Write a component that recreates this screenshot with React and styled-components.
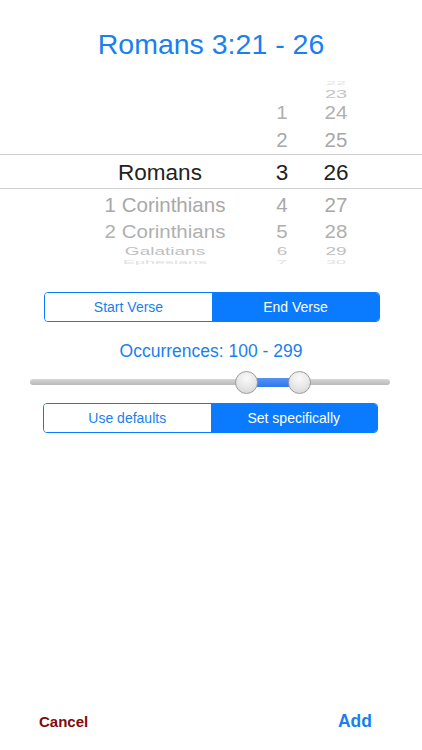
import React, { useState } from "react";
import styled, { createGlobalStyle } from "styled-components";

const GlobalStyle = createGlobalStyle`
  html, body {
    margin: 0;
    padding: 0;
    background: #ffffff;
  }
  body {
    font-family: "Liberation Sans", Arial, sans-serif;
    -webkit-font-smoothing: antialiased;
  }
`;

const Screen = styled.div`
  width: 100%;
  min-height: 100vh;
  display: flex;
  flex-direction: column;
  background: #fff;
`;

const Title = styled.h1`
  margin: 0;
  padding-top: 27px;
  text-align: center;
  font-size: 28.5px;
  line-height: 34px;
  font-weight: normal;
  color: #1a7fef;
`;

const Picker = styled.div`
  margin-top: 17px;
  display: flex;
  flex-direction: column;
`;

const Row = styled.div`
  height: ${(p) => p.h}px;
  display: flex;
  align-items: center;
  padding-left: 71px;
  padding-top: ${(p) => (p.selected ? 3 : 0)}px;
  box-sizing: border-box;
  overflow: hidden;
  border-top: ${(p) => (p.selected ? "1px solid #d0d0d0" : "none")};
  border-bottom: ${(p) => (p.selected ? "1px solid #d0d0d0" : "none")};
`;

const Cell = styled.div`
  width: ${(p) => p.w}px;
  text-align: center;
  white-space: nowrap;
  font-size: ${(p) => p.size}px;
  line-height: ${(p) => p.size}px;
  color: ${(p) => p.color};
  transform: translateX(${(p) => p.dx || 0}px) scaleY(${(p) => p.sy});
`;

const Segmented = styled.div`
  display: flex;
  margin: ${(p) => p.mt}px 0 0 ${(p) => p.ml}px;
  width: ${(p) => p.w}px;
  height: 30px;
  border: 1px solid #0a7aff;
  border-radius: 4px;
  overflow: hidden;
  box-sizing: border-box;
`;

const Segment = styled.button`
  flex: 1;
  border: none;
  margin: 0;
  padding: 0;
  font-family: "Liberation Sans", Arial, sans-serif;
  font-size: 14px;
  background: ${(p) => (p.active ? "#0a7aff" : "#ffffff")};
  color: ${(p) => (p.active ? "#ffffff" : "#1a7fef")};
  cursor: pointer;
`;

const Occurrences = styled.div`
  margin-top: 19px;
  text-align: center;
  font-size: 17.5px;
  line-height: 20px;
  color: #1a7fef;
`;

const SliderWrap = styled.div`
  margin: 10px 32px 0 30px;
  height: 24px;
  position: relative;
`;

const Track = styled.div`
  position: absolute;
  left: 0;
  right: 0;
  top: 8px;
  height: 6px;
  border-radius: 3px;
  background: linear-gradient(#d6d6d6, #b9b9b9);
`;

const Fill = styled.div`
  position: absolute;
  top: 7px;
  height: 9px;
  background: linear-gradient(#5593f5, #2f78ee);
`;

const Thumb = styled.div`
  position: absolute;
  top: 0;
  width: 23px;
  height: 23px;
  margin-left: -12px;
  border-radius: 50%;
  box-sizing: border-box;
  border: 1px solid #9d9d9d;
  background: radial-gradient(circle at 50% 30%, #fafafa 0%, #e6e6e6 55%, #cfcfcf 100%);
`;

const Footer = styled.div`
  margin-top: auto;
  display: flex;
  justify-content: space-between;
  align-items: center;
  height: 30px;
  padding: 0 50px 14px 39px;
`;

const Cancel = styled.span`
  font-size: 15px;
  font-weight: bold;
  color: #7f0b0b;
`;

const Add = styled.span`
  font-size: 17.5px;
  font-weight: bold;
  color: #1a7fef;
`;

const rows = [
  { h: 10, size: 18, sy: 0.3, color: "#e4e4e4", book: "", ch: "", v: "22" },
  { h: 12, size: 20, sy: 0.56, color: "#c4c4c4", book: "", ch: "", v: "23" },
  { h: 27, size: 20.5, sy: 0.88, color: "#b0b0b0", book: "", ch: "1", v: "24" },
  { h: 27, size: 20.5, sy: 0.95, color: "#a8a8a8", book: "", ch: "2", v: "25" },
  { h: 35, size: 22.5, sy: 1, color: "#222222", book: "Romans", ch: "3", v: "26", selected: true, dx: -5 },
  { h: 32, size: 20.5, sy: 0.95, color: "#a8a8a8", book: "1 Corinthians", ch: "4", v: "27" },
  { h: 22, size: 20.5, sy: 0.88, color: "#b0b0b0", book: "2 Corinthians", ch: "5", v: "28" },
  { h: 16, size: 19, sy: 0.55, color: "#c0c0c0", book: "Galatians", ch: "6", v: "29" },
  { h: 6, size: 18, sy: 0.3, color: "#e0e0e0", book: "Ephesians", ch: "7", v: "30" },
];

const SliderMin = 217;
const SliderMax = 270;

export default function App() {
  const [verse, setVerse] = useState("end");
  const [mode, setMode] = useState("specific");

  return (
    <Screen>
      <GlobalStyle />
      <Title>Romans 3:21 - 26</Title>
      <Picker>
        {rows.map((r, i) => (
          <Row key={i} h={r.h} selected={r.selected}>
            <Cell w={188} size={r.size} sy={r.sy} color={r.color} dx={r.dx}>
              {r.book}
            </Cell>
            <Cell w={46} size={r.size} sy={r.sy} color={r.color}>
              {r.ch}
            </Cell>
            <Cell w={62} size={r.size} sy={r.sy} color={r.color}>
              {r.v}
            </Cell>
          </Row>
        ))}
      </Picker>
      <Segmented mt={27} ml={44} w={336}>
        <Segment active={verse === "start"} onClick={() => setVerse("start")}>
          Start Verse
        </Segment>
        <Segment active={verse === "end"} onClick={() => setVerse("end")}>
          End Verse
        </Segment>
      </Segmented>
      <Occurrences>Occurrences: 100 - 299</Occurrences>
      <SliderWrap>
        <Track />
        <Fill style={{ left: SliderMin, width: SliderMax - SliderMin }} />
        <Thumb style={{ left: SliderMin }} />
        <Thumb style={{ left: SliderMax }} />
      </SliderWrap>
      <Segmented mt={8} ml={43} w={335}>
        <Segment active={mode === "defaults"} onClick={() => setMode("defaults")}>
          Use defaults
        </Segment>
        <Segment active={mode === "specific"} onClick={() => setMode("specific")}>
          Set specifically
        </Segment>
      </Segmented>
      <Footer>
        <Cancel>Cancel</Cancel>
        <Add>Add</Add>
      </Footer>
    </Screen>
  );
}
